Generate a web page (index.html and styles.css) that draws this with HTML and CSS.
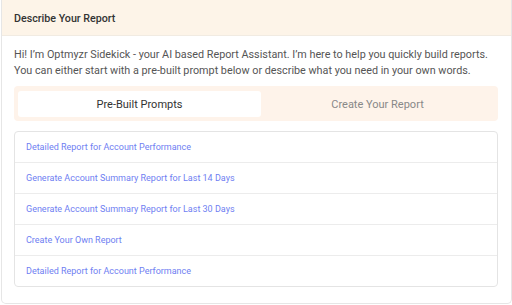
FILE: index.html
```html
<!DOCTYPE html>
<html>
<head>
<meta charset="utf-8">
<link rel="stylesheet" href="styles.css">
</head>
<body>
<div class="card">
  <div class="card-header">Describe Your Report</div>
  <div class="card-body">
    <p class="intro">Hi! I’m Optmyzr Sidekick - your AI based Report Assistant. I’m here to help you quickly build reports.<br>You can either start with a pre-built prompt below or describe what you need in your own words.</p>
    <div class="tabs">
      <div class="tab active">Pre-Built Prompts</div>
      <div class="tab">Create Your Report</div>
    </div>
    <ul class="prompts">
      <li>Detailed Report for Account Performance</li>
      <li>Generate Account Summary Report for Last 14 Days</li>
      <li>Generate Account Summary Report for Last 30 Days</li>
      <li>Create Your Own Report</li>
      <li>Detailed Report for Account Performance</li>
    </ul>
  </div>
</div>
</body>
</html>
```

FILE: styles.css
```css
html, body {
  margin: 0;
  padding: 0;
  background: #ffffff;
}
body {
  padding-left: 1px;
  font-family: Roboto, "Liberation Sans", sans-serif;
}
.card {
  width: 511px;
  height: 304px;
  box-sizing: border-box;
  border: 1px solid #e6e6e6;
  border-top: none;
  border-radius: 0 0 5px 5px;
  overflow: hidden;
  background: #fff;
}
.card-header {
  height: 36px;
  box-sizing: border-box;
  background: #fdf4e8;
  border-bottom: 1px solid #f1ebe2;
  padding: 2px 0 0 12px;
  display: flex;
  align-items: center;
  font-size: 10.7px;
  font-weight: 500;
  color: #333;
}
.card-body {
  padding: 11px 13px 0 12px;
}
.intro {
  margin: 0;
  font-size: 10.8px;
  line-height: 16px;
  color: #555;
  white-space: nowrap;
}
.tabs {
  margin-top: 7px;
  height: 35px;
  box-sizing: border-box;
  background: #fef3ea;
  border-radius: 4px;
  padding: 5px 4px 4px 4px;
  display: flex;
}
.tab {
  flex: 1;
  display: flex;
  align-items: center;
  justify-content: center;
  font-size: 11px;
  color: #888;
  border-radius: 3px;
}
.tab.active {
  flex: 0 0 243px;
  background: #fff;
  color: #333;
}
.prompts {
  list-style: none;
  margin: 10px 0 0 0;
  padding: 0;
  border: 1px solid #e4e4e4;
  border-radius: 4px;
}
.prompts li {
  height: 31px;
  box-sizing: border-box;
  display: flex;
  align-items: center;
  padding-left: 11px;
  font-size: 9px;
  color: #6f80f2;
  border-top: 1px solid #ececec;
}
.prompts li:first-child {
  border-top: none;
  height: 30px;
}
```
